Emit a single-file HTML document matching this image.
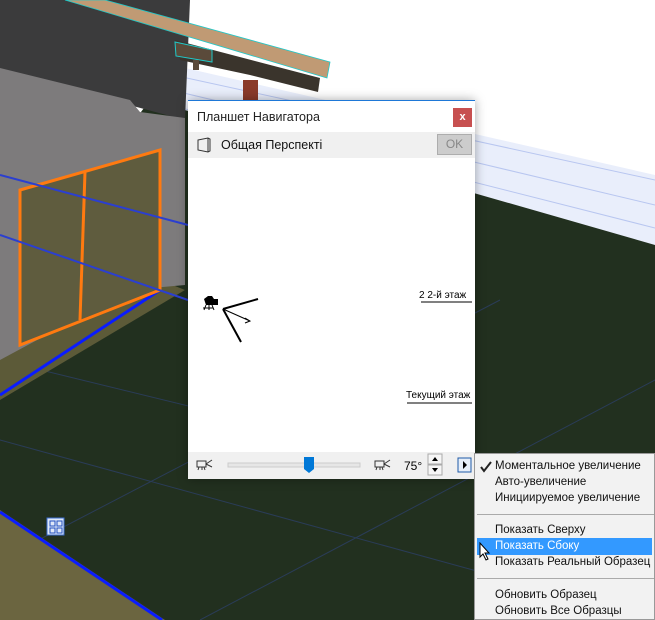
<!DOCTYPE html>
<html><head><meta charset="utf-8"><style>
*{margin:0;padding:0;box-sizing:border-box}
body{width:655px;height:620px;overflow:hidden;position:relative;font-family:"Liberation Sans",sans-serif;background:#fff}
svg.bg{position:absolute;left:0;top:0}
.dlg{position:absolute;left:188px;top:100px;width:287px;height:379px;background:#fff;border-top:1px solid #1e78d7;box-shadow:0 0 10px rgba(0,0,0,.35)}
.t{position:absolute;left:9px;top:9px;font-size:12.5px;color:#222}
.x{position:absolute;right:3px;top:7px;width:19px;height:19px;background:#c75050;color:#fff;font-size:11px;font-weight:bold;text-align:center;line-height:18px}
.hdr{position:absolute;left:0;top:31px;width:100%;height:26px;background:#f0f0f0}
.hdr span{position:absolute;left:33px;top:6px;font-size:12.5px;color:#111}
.ok{position:absolute;right:3px;top:2px;width:35px;height:21px;background:#ccc;border:1px solid #adadad;color:#888;font-size:12px;text-align:center;line-height:19px}
.bot{position:absolute;left:0;bottom:0;width:100%;height:27px;background:#f0f0f0}
.menu{position:absolute;left:474px;top:453px;width:181px;height:167px;background:#f2f2f2;border:1px solid #999;font-size:11.5px;color:#111}
.menu .i{position:absolute;left:20px;white-space:nowrap}
.menu .sep{position:absolute;left:2px;right:0;height:1px;background:#aaa}
.menu .hl{position:absolute;left:2px;right:2px;top:84px;height:17px;background:#3399ff}
</style></head><body>
<svg class="bg" width="655" height="620" viewBox="0 0 655 620">
<rect width="655" height="620" fill="#fff"/>
<polygon points="150,60 655,175 655,250 150,110" fill="#e9eefb"/>
<g stroke="#b8c6f0" stroke-width="1"><line x1="150" y1="70" x2="655" y2="180"/><line x1="150" y1="85" x2="655" y2="205"/><line x1="150" y1="100" x2="655" y2="228"/></g>
<polygon points="150,100 655,245 655,620 0,620 0,300" fill="#22301f"/>
<g stroke="#2c3f66" stroke-width="1" opacity=".8"><line x1="0" y1="440" x2="655" y2="620"/><line x1="0" y1="360" x2="655" y2="520"/><line x1="200" y1="620" x2="655" y2="380"/><line x1="0" y1="560" x2="500" y2="300"/></g>
<polygon points="0,510 165,620 0,620" fill="#6b6540"/>
<line x1="0" y1="512" x2="162" y2="620" stroke="#0a1cff" stroke-width="3"/>
<polygon points="0,330 160,280 185,290 0,400" fill="#5c5a38"/>
<line x1="0" y1="395" x2="160" y2="290" stroke="#0a1cff" stroke-width="3"/>
<polygon points="0,0 190,0 185,120 0,70" fill="#3b3b3c"/>
<polygon points="0,68 130,100 140,112 185,118 185,285 130,290 0,360" fill="#7d7b7c"/>
<polygon points="20,190 160,150 160,290 20,345" fill="#5f5c3e"/>
<polygon points="20,190 160,150 160,290 20,345" fill="none" stroke="#ff7a10" stroke-width="3"/>
<line x1="85" y1="172" x2="80" y2="320" stroke="#ff7a10" stroke-width="3"/>
<line x1="0" y1="175" x2="188" y2="225" stroke="#2b3fd0" stroke-width="2"/>
<line x1="0" y1="235" x2="188" y2="300" stroke="#2b3fd0" stroke-width="2"/>
<polygon points="175,40 320,78 318,92 250,75 180,60" fill="#3a342c"/>
<polygon points="65,0 105,0 330,62 327,78" fill="#c09a74" stroke="#20c8c8" stroke-width="0.8"/>
<polygon points="175,42 212,50 212,62 176,56" fill="#5a4a3a" stroke="#20c8c8"/>
<rect x="193" y="60" width="6" height="10" fill="#5a4a3a"/>
<rect x="243" y="80" width="15" height="20" fill="#8a3a2a"/>
<rect x="47" y="518" width="17" height="17" fill="#dfe8f8" stroke="#3a6bd0"/>
<g fill="none" stroke="#2050c0"><rect x="50" y="521" width="5" height="5"/><rect x="57" y="528" width="5" height="5"/><rect x="57" y="521" width="5" height="5"/><rect x="50" y="528" width="5" height="5"/></g>
</svg>
<div class="dlg">
<div class="t">Планшет Навигатора</div>
<div class="x">x</div>
<div class="hdr"><svg style="position:absolute;left:9px;top:5px" width="14" height="16"><path d="M1 3 L11 1 L13 2 L13 14 L11 15 L1 13 Z M11 1 L11 15" fill="none" stroke="#333"/></svg><span>Общая Перспекті</span><div class="ok">OK</div></div>
<svg style="position:absolute;left:0;top:180px" width="287" height="140">
<path d="M16 18 l4-3 h4 l2 3 h4 v6 h-12z" fill="#000"/><path d="M18 24 l-2 5 M21 24 v5 M24 24 l2 5 M15 27 h10" stroke="#000"/>
<path d="M35 28 L70 18 M35 28 L53 61" stroke="#000" stroke-width="2"/>
<path d="M35 28 L62 40 M57 37 L62 40 L57 42" stroke="#000" fill="none"/>
<text x="231" y="17" font-size="10" font-family="Liberation Sans">2  2-й этаж</text>
<line x1="233" y1="21" x2="284" y2="21" stroke="#000"/>
<text x="218" y="117" font-size="10" font-family="Liberation Sans">Текущий этаж</text>
<line x1="219" y1="122" x2="284" y2="122" stroke="#000"/>
</svg>
<div class="bot">
<svg width="287" height="27"><path d="M9 9 h9 v6 h-9z M18 12 l6-4 M18 12 l6 3 M11 15 l-1 3 M14 15 v3 M16 15 l1 3" fill="none" stroke="#333"/><path d="M187 9 h9 v6 h-9z M196 12 l6-4 M196 12 l6 3 M189 15 l-1 3 M192 15 v3 M194 15 l1 3" fill="none" stroke="#333"/>
<rect x="40" y="11" width="132" height="4" fill="#e6e6e6" stroke="#ccc"/>
<path d="M116 5 h10 v12 l-5 4 l-5-4z" fill="#0078d7"/>
<text x="216" y="18" font-size="12" font-family="Liberation Sans">75°</text>
<rect x="240" y="2" width="14" height="10" fill="#f6f6f6" stroke="#aaa"/><path d="M244 9 l3-4 l3 4z"/>
<rect x="240" y="13" width="14" height="10" fill="#f6f6f6" stroke="#aaa"/><path d="M244 16 l3 4 l3-4z"/>
<rect x="270" y="6" width="13" height="14" fill="#e6eef8" stroke="#1e5aa8"/><path d="M275 9 l4 4 l-4 4z"/></svg>
</div>
</div>
<div class="menu">
<svg style="position:absolute;left:5px;top:7px" width="12" height="12"><path d="M1 6 l3 4 l7-9" fill="none" stroke="#222" stroke-width="2"/></svg>
<div class="i" style="top:6px">Моментальное увеличение</div>
<div class="i" style="top:22px">Авто-увеличение</div>
<div class="i" style="top:38px">Инициируемое увеличение</div>
<div class="sep" style="top:60px"></div>
<div class="i" style="top:70px">Показать Сверху</div>
<div class="hl"></div>
<div class="i" style="top:86px;color:#fff">Показать Сбоку</div>
<div class="i" style="top:102px">Показать Реальный Образец</div>
<div class="sep" style="top:124px"></div>
<div class="i" style="top:135px">Обновить Образец</div>
<div class="i" style="top:151px">Обновить Все Образцы</div>
<svg style="position:absolute;left:4px;top:88px" width="12" height="20"><path d="M1 1 L1 15 L4 12 L7 18 L9 17 L6 11 L10 11 Z" fill="#fff" stroke="#000"/></svg>
</div>
</body></html>
